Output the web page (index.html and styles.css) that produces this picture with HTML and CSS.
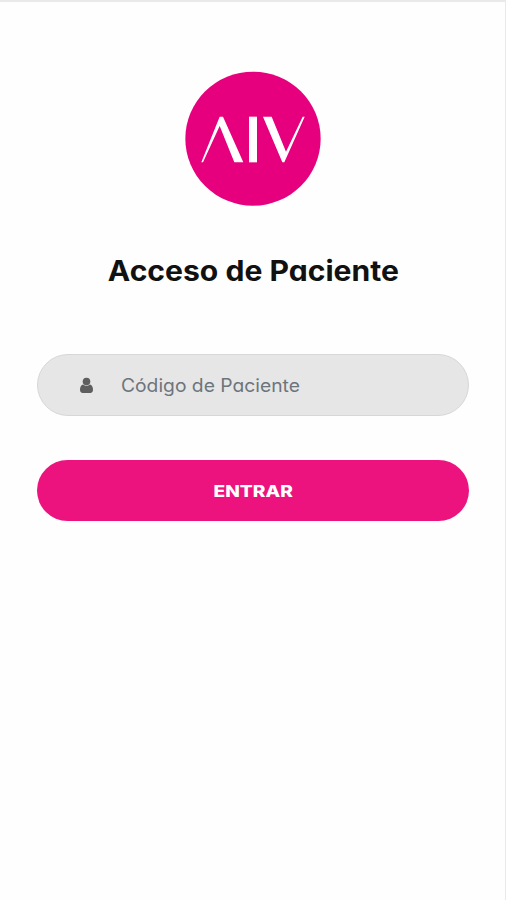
FILE: index.html
```html
<!DOCTYPE html>
<html lang="es">
<head>
<meta charset="utf-8">
<meta name="viewport" content="width=device-width, initial-scale=1">
<title>Acceso de Paciente</title>
<link rel="stylesheet" href="styles.css">
</head>
<body>
<main class="login">
  <svg class="logo" viewBox="0 0 408 408" role="img" aria-label="AIV">
    <ellipse cx="204" cy="203" rx="203" ry="201" fill="#e6007e"/>
    <g fill="#fff">
      <path d="M104 137h10l61 137h-27L104 165 54 274h-5z"/>
      <path d="M192 137h24v137h-24z"/>
      <path d="M234 137h26l43 105 50-105h6l-61 137h-6z"/>
    </g>
  </svg>
  <h1 class="title">Acceso de Paciente</h1>
  <form class="form">
    <label class="field">
      <svg class="user-icon" viewBox="0 0 14 17" aria-hidden="true">
        <circle cx="7" cy="4.2" r="4.1"/>
        <path d="M3.4 7.4C1.2 7.9 0 10 0 13.2C0 15.4 1 16.5 2.4 16.5h9.2c1.4 0 2.4-1.1 2.4-3.3c0-3.2-1.2-5.3-3.4-5.8C8.7 9.2 5.3 9.2 3.4 7.4z"/>
      </svg>
      <input class="input" type="text" placeholder="Código de Paciente">
    </label>
    <button class="submit" type="button"><span class="submit-text">ENTRAR</span></button>
  </form>
</main>
</body>
</html>
```
FILE: styles.css
```css
* { box-sizing: border-box; }

body {
  margin: 0;
  background: #fefefe;
  font-family: Inter, "Open Sans", sans-serif;
  font-feature-settings: "cv11", "ss03";
}

.login {
  display: flex;
  flex-direction: column;
  align-items: center;
  min-height: 900px;
  padding: 69px 36px 0 37px;
  border-top: 2px solid #e9e9e9;
  border-right: 1px solid #e9e9e9;
}

.logo {
  display: block;
  width: 136px;
  height: 136px;
}

.title {
  margin: 44px 0 0;
  color: #111;
  font-size: 28px;
  font-weight: 650;
  line-height: 40px;
  white-space: nowrap;
  transform: scaleX(1.075);
}

.form {
  display: flex;
  flex-direction: column;
  gap: 44px;
  width: 100%;
  margin-top: 63px;
}

.field {
  display: flex;
  align-items: center;
  height: 62px;
  padding: 0 30px 0 42px;
  background: #e6e6e6;
  border: 1px solid #d6d8d8;
  border-radius: 31px;
}

.user-icon {
  flex: none;
  width: 13px;
  height: 17px;
  margin-right: 28px;
  fill: #5e5e5e;
}

.input {
  flex: 1;
  min-width: 0;
  padding: 2px 0 0;
  background: none;
  border: 0;
  outline: 0;
  font: 400 18px/28px Inter, "Open Sans", sans-serif;
  font-feature-settings: inherit;
  transform: scaleX(1.07);
  transform-origin: left;
}

.input::placeholder {
  color: #6c757d;
  opacity: 1;
}

.submit {
  height: 61px;
  padding: 0;
  background: #ec137f;
  border: 0;
  border-radius: 31px;
  color: #fff;
  font: 800 16.5px/24px Inter, "Open Sans", sans-serif;
}

.submit-text {
  display: inline-block;
  transform: scaleX(1.16);
}
```
